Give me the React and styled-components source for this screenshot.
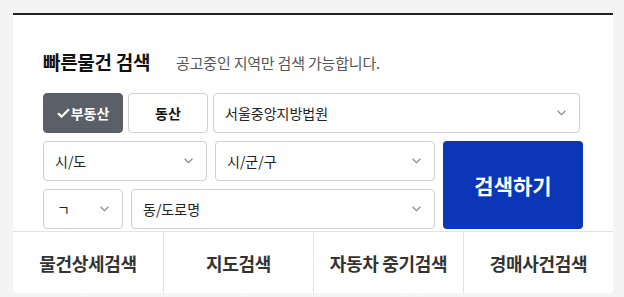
import React from "react";
import styled, { createGlobalStyle } from "styled-components";

const Global = createGlobalStyle`
  html, body { margin: 0; padding: 0; background: #f4f4f4; }
  body { font-family: "Noto Sans CJK KR", "Noto Sans", sans-serif; }
  * { box-sizing: border-box; }
`;

const Page = styled.div`
  padding: 13px 11px 0 13px;
`;

const Card = styled.section`
  width: 600px;
  height: 280px;
  background: #fff;
  border-top: 2px solid #222;
  border-radius: 0 0 3px 3px;
  display: flex;
  flex-direction: column;
`;

const Body = styled.div`
  padding: 32px 30px 0 30px;
`;

const TitleRow = styled.div`
  display: flex;
  align-items: center;
  height: 28px;
  margin-bottom: 18px;
`;

const Title = styled.h2`
  margin: 0;
  font-size: 19px;
  font-weight: 700;
  color: #111;
  letter-spacing: -0.3px;
`;

const Sub = styled.span`
  margin-left: 26px;
  font-size: 15px;
  color: #555;
  padding-top: 2px;
  letter-spacing: -0.2px;
`;

const Row1 = styled.div`
  display: grid;
  grid-template-columns: 80px 80px 367px;
  gap: 5px;
  height: 40px;
  margin-bottom: 8px;
`;

const Grid = styled.div`
  display: grid;
  grid-template-columns: 80px 76px 220px 140px;
  grid-template-rows: 40px 40px;
  column-gap: 8px;
  row-gap: 8px;
`;

const Toggle = styled.button`
  font-family: inherit;
  font-size: 14px;
  font-weight: 700;
  border-radius: 4px;
  border: 1px solid ${(p) => (p.$active ? "#5b5f67" : "#cfcfcf")};
  background: ${(p) => (p.$active ? "#5b5f67" : "#fff")};
  color: ${(p) => (p.$active ? "#fff" : "#111")};
  display: flex;
  align-items: center;
  justify-content: center;
  padding: 0;
  gap: 1px;
`;

const SelectBox = styled.div`
  grid-column: ${(p) => p.$col || "auto"};
  display: flex;
  align-items: center;
  justify-content: space-between;
  border: 1px solid #cfcfcf;
  border-radius: 4px;
  background: #fff;
  padding: 0 13px 0 ${(p) => p.$pl || 11}px;
  font-size: 14px;
  color: #222;
`;

const SearchBtn = styled.button`
  grid-column: 4;
  grid-row: 1 / span 2;
  background: #0c36b8;
  color: #fff;
  border: none;
  border-radius: 4px;
  font-family: inherit;
  font-size: 21px;
  font-weight: 700;
  padding: 0;
`;

const Tabs = styled.nav`
  margin-top: 2px;
  border-top: 1px solid #e3e3e3;
  display: grid;
  grid-template-columns: repeat(4, 1fr);
  flex: 1;
`;

const Tab = styled.div`
  display: flex;
  align-items: center;
  justify-content: center;
  font-size: 18px;
  font-weight: 700;
  color: #333;
  border-left: ${(p) => (p.$first ? "none" : "1px solid #e3e3e3")};
  letter-spacing: -0.3px;
`;

const Chevron = () => (
  <svg width="9" height="6" viewBox="0 0 9 6" fill="none">
    <path d="M0.6 0.8 L4.5 4.6 L8.4 0.8" stroke="#888" strokeWidth="1.2" />
  </svg>
);

const Check = () => (
  <svg width="13" height="10" viewBox="0 0 13 10" fill="none">
    <path d="M1 5.2 L4.6 8.6 L12 1.2" stroke="#fff" strokeWidth="2.2" />
  </svg>
);

const Select = ({ label, col, pl }) => (
  <SelectBox $col={col} $pl={pl}>
    <span>{label}</span>
    <Chevron />
  </SelectBox>
);

export default function App() {
  return (
    <>
      <Global />
      <Page>
        <Card>
          <Body>
            <TitleRow>
              <Title>빠른물건 검색</Title>
              <Sub>공고중인 지역만 검색 가능합니다.</Sub>
            </TitleRow>
            <Row1>
              <Toggle $active>
                <Check />
                부동산
              </Toggle>
              <Toggle>동산</Toggle>
              <Select label="서울중앙지방법원" />
            </Row1>
            <Grid>
              <Select label="시/도" col="1 / span 2" />
              <Select label="시/군/구" col="3" />
              <SearchBtn>검색하기</SearchBtn>
              <Select label="ㄱ" col="1" pl={13} />
              <Select label="동/도로명" col="2 / span 2" />
            </Grid>
          </Body>
          <Tabs>
            <Tab $first>물건상세검색</Tab>
            <Tab>지도검색</Tab>
            <Tab>자동차 중기검색</Tab>
            <Tab>경매사건검색</Tab>
          </Tabs>
        </Card>
      </Page>
    </>
  );
}
